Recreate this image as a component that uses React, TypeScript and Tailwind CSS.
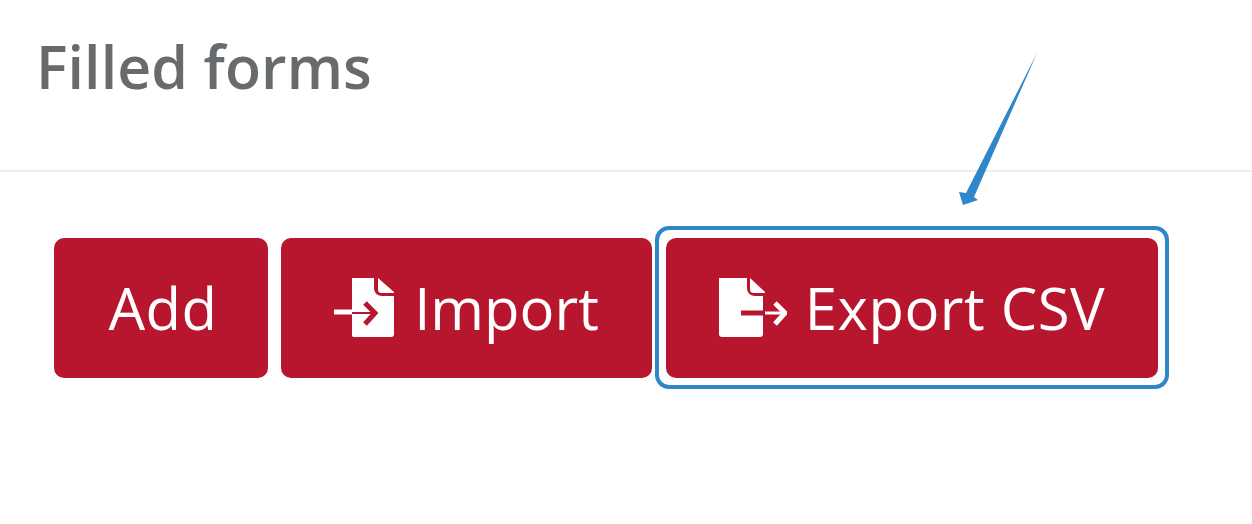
import { ReactNode } from 'react';

function ImportIcon() {
  return (
    <svg width="62" height="60" viewBox="0 0 62 60" className="mr-[18px] shrink-0">
      <path d="M18 0H40V10C40 15 44 18 48 18H60V56C60 58 59 59 57 59H20C18 59 18 58 18 56Z" fill="white" />
      <path d="M44 0L60 14V15H48C45 15 44 14 44 11Z" fill="white" />
      <path d="M0 34H18" stroke="white" strokeWidth="5" />
      <path d="M18 35H40" stroke="#b8152f" strokeWidth="2" />
      <path d="M31 25L41 35L31 46" stroke="#b8152f" strokeWidth="5" fill="none" />
    </svg>
  );
}

function ExportIcon() {
  return (
    <svg width="68" height="60" viewBox="0 0 68 60" className="mr-[18px] shrink-0">
      <path d="M0 0H28V10C28 15 32 18 36 18H44V56C44 58 43 59 41 59H3C1 59 0 58 0 56Z" fill="white" />
      <path d="M31 0L46 14V15H35C32 15 31 14 31 11Z" fill="white" />
      <path d="M22 35H44" stroke="#b8152f" strokeWidth="5" />
      <path d="M46 35H65" stroke="white" strokeWidth="3" />
      <path d="M56 25L66 35L56 46" stroke="white" strokeWidth="5" fill="none" />
    </svg>
  );
}

function RedButton({ width, children }: { width: string; children: ReactNode }) {
  return (
    <button className={`relative flex h-[140px] items-center justify-center rounded-[10px] bg-[#b8152f] text-[58px] leading-none text-white ${width}`}>
      <span className="flex items-center blur-[0.4px]">{children}</span>
    </button>
  );
}

export default function App() {
  return (
    <div className="relative h-[524px] w-[1252px] overflow-hidden bg-white font-['Open_Sans',sans-serif]">
      <div className="h-[172px] border-b-2 border-[#eceef1] pl-[36px] pt-[26px]">
        <h1 className="text-[59px] font-semibold leading-[80px] tracking-[0.1px] text-[#676b6e] blur-[0.4px]">Filled forms</h1>
      </div>
      <div className="flex gap-[13px] pl-[54px] pt-[66px]">
        <RedButton width="w-[214px] pl-[4px] tracking-[0.5px]">Add</RedButton>
        <RedButton width="w-[371px]">
          <ImportIcon />
          Import
        </RedButton>
        <div className="relative ml-px">
          <RedButton width="w-[492px] tracking-[0.5px]">
            <ExportIcon />
            Export CSV
          </RedButton>
          {/* annotation outline */}
          <div className="absolute -top-[12px] -bottom-[11px] -inset-x-[11px] rounded-[14px] border-[4px] border-[#2e86cb]" />
        </div>
      </div>
      {/* annotation arrow */}
      <svg width="1252" height="524" viewBox="0 0 1252 524" className="absolute left-0 top-0">
        <path d="M1037 53L974 197L978 200L963 205L959 192L966 193Z" fill="#2e86cb" />
      </svg>
    </div>
  );
}
